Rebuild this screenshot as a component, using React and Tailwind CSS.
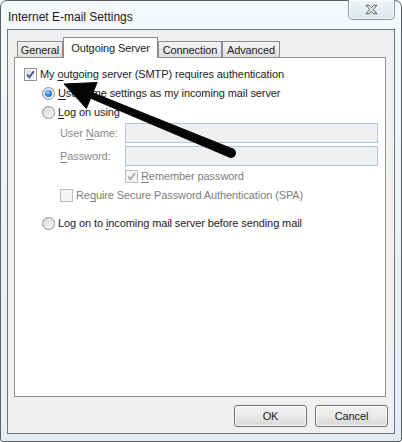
import React from 'react'

const font = { fontFamily: '"Liberation Sans", Arial, sans-serif' }

function Check({ checked, disabled }) {
  return (
    <div className={`w-[13px] h-[13px] border shrink-0 relative ${disabled ? 'border-[#bcbcbc] bg-[#f4f4f4]' : 'border-[#8e8f8f] bg-white'}`}>
      <div className={`absolute inset-[1px] ${disabled ? 'bg-[#f4f4f4]' : 'bg-gradient-to-br from-[#d4d7dc] to-[#f7f7f7]'}`} />
      {checked && (
        <svg className="absolute inset-0" width="11" height="11" viewBox="0 0 11 11">
          <path d="M2.2 5.6 L4.4 8.3 L8.8 2.2" fill="none" stroke={disabled ? '#a8a8a8' : '#3f5384'} strokeWidth="1.8" />
        </svg>
      )}
    </div>
  )
}

function Radio({ checked }) {
  return (
    <div className="w-[13px] h-[13px] rounded-full border border-[#8e8f8f] bg-gradient-to-br from-[#d3d6db] to-[#fbfbfb] shrink-0 flex items-center justify-center">
      {checked && (
        <div className="w-[7px] h-[7px] rounded-full bg-[radial-gradient(circle_at_40%_35%,#a6dcff_0%,#2a8ee0_45%,#0f4f9c_100%)]" />
      )}
    </div>
  )
}

function U({ children }) {
  return <span className="underline underline-offset-[2px]">{children}</span>
}

function Tab({ label, w, selected }) {
  if (selected) {
    return (
      <div className={`${w} h-[21px] -mb-px bg-white border border-b-0 border-[#898c95] relative z-10 flex items-start justify-center pt-[2px]`}>
        {label}
      </div>
    )
  }
  return (
    <div className={`${w} h-[16px] border border-b-0 border-[#898c95] bg-gradient-to-b from-[#f3f3f3] via-[#ebebeb] to-[#dcdcdc] flex items-center justify-center pt-[1px]`}>
      {label}
    </div>
  )
}

// hand-drawn style pointer laid over the dialog
function Arrow() {
  const tip = [64, 84]
  const tail = [231, 153]
  const dx = tail[0] - tip[0]
  const dy = tail[1] - tip[1]
  const len = Math.hypot(dx, dy)
  const u = [dx / len, dy / len]
  const n = [-u[1], u[0]]
  const headLen = 30
  const headHalf = 14
  const b = [tip[0] + u[0] * headLen, tip[1] + u[1] * headLen]
  const p = (c, s, w) => `${(c[0] + n[0] * w * s).toFixed(1)},${(c[1] + n[1] * w * s).toFixed(1)}`
  const b2 = [b[0] - u[0] * 3, b[1] - u[1] * 3]
  const head = `${tip[0]},${tip[1]} ${p(b, 1, headHalf)} ${p(b, -1, headHalf)}`
  const shaft = `${p(b2, 1, 3.4)} ${p(tail, 1, 5)} ${p(tail, -1, 5)} ${p(b2, -1, 3.4)}`
  return (
    <svg className="absolute inset-0 pointer-events-none" width="402" height="442" viewBox="0 0 402 442">
      <g fill="#050505">
        <polygon points={head} strokeLinejoin="round" stroke="#050505" strokeWidth="1" />
        <polygon points={shaft} />
        <circle cx={tail[0]} cy={tail[1]} r="5" />
      </g>
    </svg>
  )
}

export default function App() {
  return (
    <div className="w-[402px] h-[442px] relative bg-white" style={font}>
      <div className="w-[402px] h-[442px] border border-[#5b5f63] rounded-t-[7px] rounded-b-[3px] bg-gradient-to-b from-[#f6f9fc] via-[#eaf2f8] to-[#e2eef7] flex flex-col text-[11px] tracking-[-0.1px] text-[#1b1b1b]">
        {/* Title bar */}
        <div className="h-[28px] flex items-start justify-between pr-[6px]">
          <div className="pl-[7px] pt-[7px] text-[12px] tracking-normal text-[#1a1a1a]">Internet E-mail Settings</div>
          <div className="-mt-px w-[47px] h-[20px] rounded-b-[5px] border border-t-0 border-[#8d959e] bg-gradient-to-b from-[#eef3f7] to-[#dde6ee] flex items-center justify-center shadow-[inset_0_0_0_1px_rgba(255,255,255,0.7)]">
            <svg width="13" height="11" viewBox="0 0 13 11">
              <path d="M1 1.2 L4.2 1.2 L6.5 3.6 L8.8 1.2 L12 1.2 L8.2 5.5 L12 9.8 L8.8 9.8 L6.5 7.4 L4.2 9.8 L1 9.8 L4.8 5.5 Z" fill="#e9e9e9" stroke="#4e5257" strokeWidth="0.9" strokeLinejoin="round" />
            </svg>
          </div>
        </div>

        {/* Client area */}
        <div className="mx-[6px] h-[405px] border border-[#707378] bg-[#f0f0f0] flex flex-col">
          <div className="ml-[6px] w-[372px] pt-[7px]">
            <div className="h-[20px] flex items-end pl-[3px]">
              <Tab label="General" w="w-[46px]" />
              <Tab label="Outgoing Server" w="w-[95px]" selected />
              <Tab label="Connection" w="w-[64px]" />
              <Tab label="Advanced" w="w-[58px]" />
            </div>
            <div className="h-[340px] border border-[#898c95] bg-white flex flex-col">
              <div className="mt-[8px] h-[16px] flex items-center pl-[9px] gap-[3px]">
                <Check checked />
                <span>My <U>o</U>utgoing server (SMTP) requires authentication</span>
              </div>
              <div className="mt-[3px] h-[16px] flex items-center pl-[27px] gap-[3px]">
                <Radio checked />
                <span><U>U</U>se same settings as my incoming mail server</span>
              </div>
              <div className="mt-[3px] h-[16px] flex items-center pl-[27px] gap-[3px]">
                <Radio />
                <span><U>L</U>og on using</span>
              </div>
              <div className="mt-[3px] h-[20px] flex items-center pl-[45px] pr-[7px]">
                <span className="w-[65px] text-[#8a8a8a]">User <U>N</U>ame:</span>
                <div className="flex-1 h-[20px] border border-[#b3c5d9] bg-[#f0f0f0]" />
              </div>
              <div className="mt-[3px] h-[20px] flex items-center pl-[45px] pr-[7px]">
                <span className="w-[65px] text-[#8a8a8a]"><U>P</U>assword:</span>
                <div className="flex-1 h-[20px] border border-[#b3c5d9] bg-[#f0f0f0]" />
              </div>
              <div className="mt-[3px] h-[15px] flex items-center pl-[110px] gap-[3px]">
                <Check checked disabled />
                <span className="text-[#7d7d7d]"><U>R</U>emember password</span>
              </div>
              <div className="mt-[4px] h-[15px] flex items-center pl-[45px] gap-[3px]">
                <Check disabled />
                <span className="text-[#7d7d7d]">Re<U>q</U>uire Secure Password Authentication (SPA)</span>
              </div>
              <div className="mt-[13px] h-[15px] flex items-center pl-[27px] gap-[3px]">
                <Radio />
                <span>Log on to <U>i</U>ncoming mail server before sending mail</span>
              </div>
            </div>
          </div>
          <div className="mt-[8px] flex justify-end gap-[8px] pr-[6px]">
            <button className="w-[73px] h-[22px] rounded-[3px] border border-[#707070] bg-gradient-to-b from-[#f2f2f2] via-[#e9e9e9] to-[#d6d6d6] shadow-[inset_0_0_0_1px_rgba(255,255,255,0.8)] text-[11px]">OK</button>
            <button className="w-[73px] h-[22px] rounded-[3px] border border-[#707070] bg-gradient-to-b from-[#f2f2f2] via-[#e9e9e9] to-[#d6d6d6] shadow-[inset_0_0_0_1px_rgba(255,255,255,0.8)] text-[11px]">Cancel</button>
          </div>
        </div>
      </div>
      <Arrow />
    </div>
  )
}
